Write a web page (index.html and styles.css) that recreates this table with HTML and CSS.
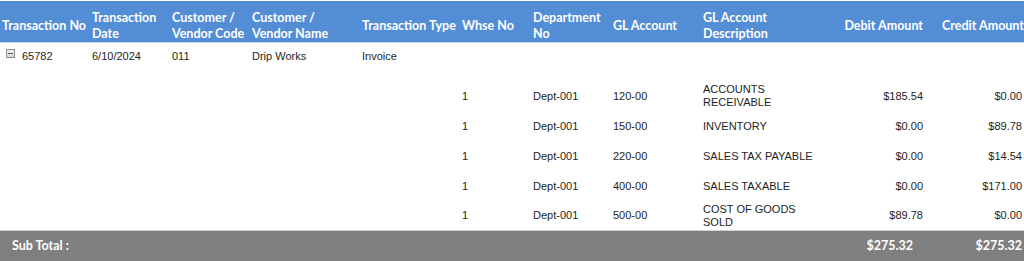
FILE: index.html
```html
<!DOCTYPE html>
<html>
<head>
<meta charset="utf-8">
<link rel="stylesheet" href="styles.css">
</head>
<body>
<table class="grid">
  <colgroup>
    <col class="c-no"><col class="c-date"><col class="c-code"><col class="c-name"><col class="c-type"><col class="c-whse"><col class="c-dept"><col class="c-gl"><col class="c-desc"><col class="c-debit"><col class="c-credit">
  </colgroup>
  <thead>
    <tr class="head">
      <th>Transaction No</th>
      <th>Transaction<br>Date</th>
      <th>Customer /<br>Vendor Code</th>
      <th>Customer /<br>Vendor Name</th>
      <th>Transaction Type</th>
      <th>Whse No</th>
      <th>Department<br>No</th>
      <th>GL Account</th>
      <th>GL Account<br>Description</th>
      <th class="num">Debit Amount</th>
      <th class="num">Credit Amount</th>
    </tr>
  </thead>
  <tbody>
    <tr class="master">
      <td><span class="toggle"></span>65782</td>
      <td>6/10/2024</td>
      <td>011</td>
      <td>Drip Works</td>
      <td>Invoice</td>
      <td></td><td></td><td></td><td></td><td></td><td></td>
    </tr>
    <tr class="detail">
      <td colspan="5"></td><td>1</td><td>Dept-001</td><td>120-00</td><td>ACCOUNTS RECEIVABLE</td><td class="num">$185.54</td><td class="num">$0.00</td>
    </tr>
    <tr class="detail">
      <td colspan="5"></td><td>1</td><td>Dept-001</td><td>150-00</td><td>INVENTORY</td><td class="num">$0.00</td><td class="num">$89.78</td>
    </tr>
    <tr class="detail">
      <td colspan="5"></td><td>1</td><td>Dept-001</td><td>220-00</td><td>SALES TAX PAYABLE</td><td class="num">$0.00</td><td class="num">$14.54</td>
    </tr>
    <tr class="detail">
      <td colspan="5"></td><td>1</td><td>Dept-001</td><td>400-00</td><td>SALES TAXABLE</td><td class="num">$0.00</td><td class="num">$171.00</td>
    </tr>
    <tr class="detail">
      <td colspan="5"></td><td>1</td><td>Dept-001</td><td>500-00</td><td>COST OF GOODS SOLD</td><td class="num">$89.78</td><td class="num">$0.00</td>
    </tr>
  </tbody>
  <tfoot>
    <tr class="total">
      <td colspan="9" class="total-label">Sub Total :</td>
      <td class="num total-debit">$275.32</td>
      <td class="num">$275.32</td>
    </tr>
  </tfoot>
</table>
</body>
</html>
```

FILE: styles.css
```css
html, body {
  margin: 0;
  padding: 0;
  background: #fff;
  overflow: hidden;
}
body {
  padding-top: 1px;
  font-family: "Liberation Sans", Arial, sans-serif;
  font-size: 11px;
  color: #1e1e1e;
}
.grid {
  border-collapse: collapse;
  table-layout: fixed;
  width: 1024px;
}
.c-no { width: 90px; }
.c-date { width: 80px; }
.c-code { width: 80px; }
.c-name { width: 110px; }
.c-type { width: 100px; }
.c-whse { width: 71px; }
.c-dept { width: 80px; }
.c-gl { width: 90px; }
.c-desc { width: 121px; }
.c-debit { width: 103px; }
.c-credit { width: 99px; }

.head th {
  background: #538dd5;
  color: #fff;
  font-family: Lato, "Open Sans", sans-serif;
  font-weight: bold;
  font-size: 12.5px;
  line-height: 16px;
  text-align: left;
  height: 41px;
  padding: 9px 2px 0;
  box-sizing: border-box;
  vertical-align: middle;
  border-bottom: 1px solid #c6d9f1;
  white-space: nowrap;
  overflow: visible;
}
.head th.num { text-align: right; }
.head th:last-child { padding-right: 0; }

td {
  padding: 0 2px;
  vertical-align: middle;
  line-height: 13px;
}
.num { text-align: right; }

.master td {
  height: 38px;
  vertical-align: top;
  padding-top: 7px;
  padding-bottom: 0;
  box-sizing: border-box;
}
.master td:first-child { padding-left: 6px; }
.toggle {
  display: inline-block;
  width: 9px;
  height: 9px;
  box-sizing: border-box;
  border: 1px solid #8c8c8c;
  background: linear-gradient(#f4f4f4, #d6d6d6);
  margin-right: 7px;
  position: relative;
  top: -4px;
  vertical-align: middle;
}
.toggle::after {
  content: "";
  position: absolute;
  left: 1px;
  right: 1px;
  top: 3px;
  height: 1px;
  background: #555;
}

.detail td {
  height: 30px;
  box-sizing: border-box;
  padding-top: 1px;
}

.total td {
  background: #7f7f7f;
  color: #fff;
  font-family: Lato, "Open Sans", sans-serif;
  font-weight: bold;
  font-size: 12.5px;
  height: 30px;
  border-top: 1px solid #d0d0d0;
  box-sizing: border-box;
}
.total .total-label { padding-left: 12px; }
.total .total-debit { padding-right: 12px; }
```
